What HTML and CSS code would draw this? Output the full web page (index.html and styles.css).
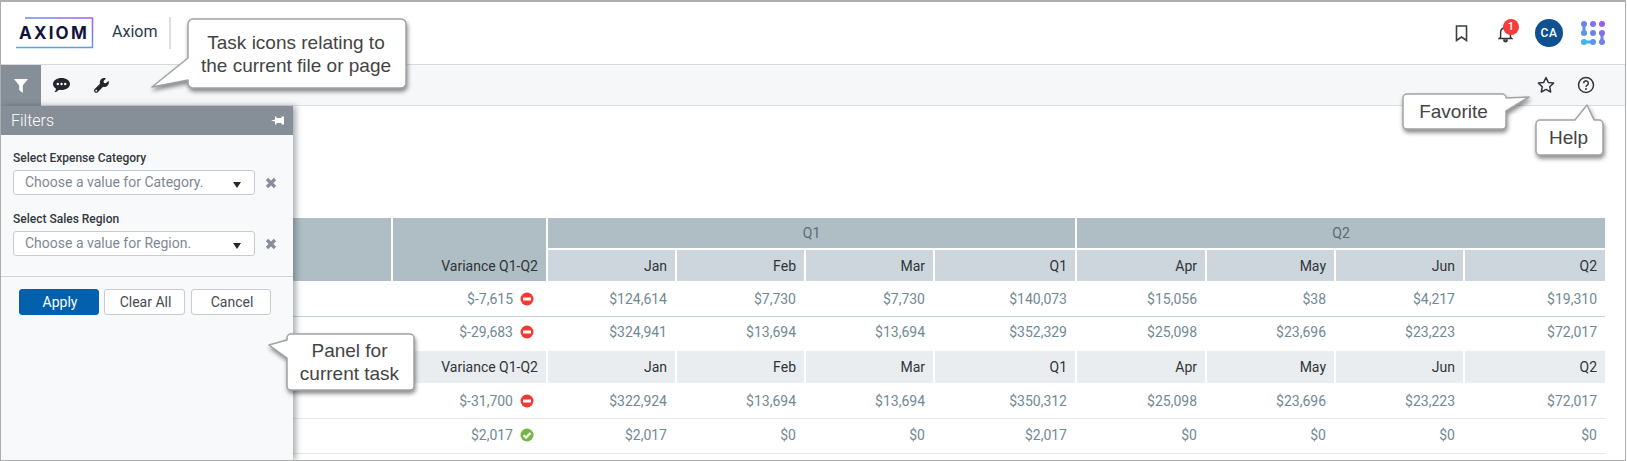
FILE: index.html
```html
<!DOCTYPE html>
<html lang="en">
<head>
    <meta charset="UTF-8">
    <title>Axiom</title>
    <link rel="stylesheet" href="styles.css">
</head>
<body>
    <div class="frame">
        <header class="topbar">
            <div class="logo">
                <svg class="logo-box" width="78" height="32" viewBox="0 0 78 32">
                    <defs>
                        <linearGradient id="logoGrad" x1="0" y1="1" x2="1" y2="0">
                            <stop offset="0" stop-color="#35b6f2"/>
                            <stop offset="0.5" stop-color="#5f97ee"/>
                            <stop offset="1" stop-color="#a85cf2"/>
                        </linearGradient>
                    </defs>
                    <path d="M9 1H76.500V30.500H0" fill="none" stroke="url(#logoGrad)" stroke-width="1.500"/>
                </svg>
                <span class="logo-text">AXIOM</span>
            </div>
            <div class="app-name">Axiom</div>
            <div class="top-icons">
                <div class="top-icon">
                    <svg width="13" height="17" viewBox="0 0 13 17"><path d="M1.500 1H11.500V15.500L6.500 12L1.500 15.500Z" fill="none" stroke="#3a3f46" stroke-width="1.600"/></svg>
                </div>
                <div class="top-icon">
                    <svg class="bell" width="15" height="18" viewBox="0 0 18 22"><path d="M3 15V9a6 6 0 0 1 12 0v6l1.500 1.500H1.500ZM7 18.500h4a2 2 0 0 1-4 0Z" fill="none" stroke="#2f343a" stroke-width="1.800"/></svg>
                    <span class="badge">1</span>
                </div>
                <div class="top-icon"><span class="avatar">CA</span></div>
                <div class="top-icon">
                    <svg width="26" height="28" viewBox="0 0 26 28">
                        <path d="M4 5V14" stroke="#5f8df0" stroke-width="3"/>
                        <path d="M4 23H13" stroke="#3fb0f0" stroke-width="3"/>
                        <path d="M22 14V23" stroke="#7d7cf0" stroke-width="3"/>
                        <circle cx="4" cy="5" r="3" fill="#6b82f0"/>
                        <circle cx="13" cy="5" r="3" fill="#8270f0"/>
                        <circle cx="22" cy="5" r="3" fill="#9b5cf0"/>
                        <circle cx="4" cy="14" r="3" fill="#5a94f0"/>
                        <circle cx="13" cy="14" r="3" fill="#6b82f0"/>
                        <circle cx="22" cy="14" r="3" fill="#8270f0"/>
                        <circle cx="4" cy="23" r="3" fill="#3fb4f0"/>
                        <circle cx="13" cy="23" r="3" fill="#5a94f0"/>
                        <circle cx="22" cy="23" r="3" fill="#6b82f0"/>
                    </svg>
                </div>
            </div>
        </header>

        <nav class="toolbar">
            <div class="tool active">
                <svg width="14" height="14" viewBox="0 0 14 14"><path d="M0 0H14L8.800 6.500V14L5.200 11V6.500Z" fill="#fff"/></svg>
            </div>
            <div class="tool">
                <svg width="17" height="15" viewBox="0 0 17 15">
                    <path d="M8.500 0C13.200 0 17 2.600 17 6S13.200 12 8.500 12C7.600 12 6.800 11.900 6 11.700C5 12.900 3.300 14 1.200 14.300C2.200 13.300 2.900 12 3 10.700C1.200 9.600 0 7.900 0 6C0 2.600 3.800 0 8.500 0Z" fill="#23262c"/>
                    <circle cx="4.800" cy="6" r="1.200" fill="#fff"/><circle cx="8.500" cy="6" r="1.200" fill="#fff"/><circle cx="12.200" cy="6" r="1.200" fill="#fff"/>
                </svg>
            </div>
            <div class="tool">
                <svg width="15" height="15" viewBox="0 0 16 16">
                    <path d="M15.700 3.600C15.600 3.200 15.200 3.200 15 3.400L12.700 5.700L10.600 5.300L10.200 3.200L12.500.900C12.700.700 12.700.300 12.300.200C10.600-.300 8.700.200 7.500 1.400C6.200 2.700 5.900 4.500 6.400 6.100L.700 11.800C-.200 12.700-.200 14.200.700 15.100C1.600 16 3.100 16 4 15.100L9.700 9.400C11.300 9.900 13.100 9.600 14.400 8.300C15.700 7.100 16.100 5.200 15.700 3.600Z" fill="#23262c"/>
                    <circle cx="2.400" cy="13.500" r="1" fill="#fff"/>
                </svg>
            </div>
            <div class="tool-spacer"></div>
            <div class="tool">
                <svg width="18" height="18" viewBox="0 0 18 18"><path d="M9 1.500L11.300 6.400L16.600 7.100L12.700 10.700L13.700 16L9 13.400L4.300 16L5.300 10.700L1.400 7.100L6.700 6.400Z" fill="none" stroke="#33373d" stroke-width="1.500" stroke-linejoin="round"/></svg>
            </div>
            <div class="tool">
                <svg width="18" height="18" viewBox="0 0 18 18">
                    <circle cx="9" cy="9" r="7.500" fill="none" stroke="#33373d" stroke-width="1.500"/>
                    <path d="M6.700 7.200A2.300 2.300 0 1 1 10.300 9.100C9.500 9.600 9 10 9 11" fill="none" stroke="#33373d" stroke-width="1.500"/>
                    <circle cx="9" cy="13" r="1" fill="#33373d"/>
                </svg>
            </div>
        </nav>

        <main class="content">
            <table class="grid">
                <colgroup>
                    <col class="col-label"><col class="col-var">
                    <col class="col-m"><col class="col-m"><col class="col-m"><col class="col-q">
                    <col class="col-apr"><col class="col-m"><col class="col-m"><col class="col-q">
                </colgroup>
                <thead>
                    <tr class="head-top">
                        <th rowspan="2"></th>
                        <th rowspan="2" class="var-head">Variance Q1-Q2</th>
                        <th colspan="4" class="quarter">Q1</th>
                        <th colspan="4" class="quarter">Q2</th>
                    </tr>
                    <tr class="head-sub">
                        <th>Jan</th><th>Feb</th><th>Mar</th><th>Q1</th>
                        <th>Apr</th><th>May</th><th>Jun</th><th>Q2</th>
                    </tr>
                </thead>
                <tbody>
                    <tr class="row-strong">
                        <td></td>
                        <td class="var">$-7,615<svg class="status"><use href="#stop"/></svg></td>
                        <td>$124,614</td><td>$7,730</td><td>$7,730</td><td>$140,073</td>
                        <td>$15,056</td><td>$38</td><td>$4,217</td><td>$19,310</td>
                    </tr>
                    <tr class="row-plain">
                        <td></td>
                        <td class="var">$-29,683<svg class="status"><use href="#stop"/></svg></td>
                        <td>$324,941</td><td>$13,694</td><td>$13,694</td><td>$352,329</td>
                        <td>$25,098</td><td>$23,696</td><td>$23,223</td><td>$72,017</td>
                    </tr>
                    <tr class="head-light">
                        <th></th>
                        <th class="var-head">Variance Q1-Q2</th>
                        <th>Jan</th><th>Feb</th><th>Mar</th><th>Q1</th>
                        <th>Apr</th><th>May</th><th>Jun</th><th>Q2</th>
                    </tr>
                    <tr class="row-light">
                        <td></td>
                        <td class="var">$-31,700<svg class="status"><use href="#stop"/></svg></td>
                        <td>$322,924</td><td>$13,694</td><td>$13,694</td><td>$350,312</td>
                        <td>$25,098</td><td>$23,696</td><td>$23,223</td><td>$72,017</td>
                    </tr>
                    <tr class="row-light row-last">
                        <td></td>
                        <td class="var">$2,017<svg class="status"><use href="#ok"/></svg></td>
                        <td>$2,017</td><td>$0</td><td>$0</td><td>$2,017</td>
                        <td>$0</td><td>$0</td><td>$0</td><td>$0</td>
                    </tr>
                </tbody>
            </table>
        </main>

        <aside class="panel">
            <div class="panel-head">
                <span>Filters</span>
                <svg width="13" height="9" viewBox="0 0 13 9"><path d="M0 4.500L4 3.500V.500H5.500V2H10.500V.500H13V8.500H10.500V7H5.500V8.500H4V5.500Z" fill="#fff"/></svg>
            </div>
            <div class="filters">
                <div class="field">
                    <label class="field-label">Select Expense Category</label>
                    <div class="field-row">
                        <div class="select">Choose a value for Category.<span class="caret"></span></div>
                        <svg class="clear" width="12" height="12" viewBox="0 0 12 12"><path d="M2 2L10 10M10 2L2 10" stroke="#878e98" stroke-width="3.200"/></svg>
                    </div>
                </div>
                <div class="field">
                    <label class="field-label">Select Sales Region</label>
                    <div class="field-row">
                        <div class="select">Choose a value for Region.<span class="caret"></span></div>
                        <svg class="clear" width="12" height="12" viewBox="0 0 12 12"><path d="M2 2L10 10M10 2L2 10" stroke="#878e98" stroke-width="3.200"/></svg>
                    </div>
                </div>
            </div>
            <div class="actions">
                <button class="btn primary">Apply</button>
                <button class="btn clear-all">Clear All</button>
                <button class="btn cancel">Cancel</button>
            </div>
        </aside>

        <div class="callout callout-task">
            <svg class="callout-shape" width="218" height="69"><path d="M5 0H213a5 5 0 0 1 5 5V64a5 5 0 0 1-5 5H5a5 5 0 0 1-5-5V61L-36 68L0 39V5a5 5 0 0 1 5-5Z"/></svg>
            <span>Task icons relating to<br>the current file or page</span>
        </div>
        <div class="callout callout-fav">
            <svg class="callout-shape" width="103" height="35"><path d="M4 0H99a4 4 0 0 1 4 4L126 3L103 17V31a4 4 0 0 1-4 4H4a4 4 0 0 1-4-4V4a4 4 0 0 1 4-4Z"/></svg>
            <span>Favorite</span>
        </div>
        <div class="callout callout-help">
            <svg class="callout-shape" width="67" height="35"><path d="M4 0H39L51-15L58 0H63a4 4 0 0 1 4 4V31a4 4 0 0 1-4 4H4a4 4 0 0 1-4-4V4a4 4 0 0 1 4-4Z"/></svg>
            <span>Help</span>
        </div>
        <div class="callout callout-panel">
            <svg class="callout-shape" width="127" height="56"><path d="M4 0H123a4 4 0 0 1 4 4V52a4 4 0 0 1-4 4H4a4 4 0 0 1-4-4V24L-18 11L0 6V4a4 4 0 0 1 4-4Z"/></svg>
            <span>Panel for<br>current task</span>
        </div>
    </div>

    <svg class="defs" width="0" height="0">
        <symbol id="stop" viewBox="0 0 14 14">
            <circle cx="7" cy="7" r="6.500" fill="#f03a32"/>
            <rect x="3" y="5.500" width="8" height="3" fill="#fff"/>
        </symbol>
        <symbol id="ok" viewBox="0 0 14 14">
            <circle cx="7" cy="7" r="6.500" fill="#72b843"/>
            <path d="M3.600 7.200L6 9.600L10.500 5" fill="none" stroke="#fff" stroke-width="2.200"/>
        </symbol>
    </svg>
</body>
</html>
```

FILE: styles.css
```css
* {
    box-sizing: border-box;
}

body {
    margin: 0;
    font-family: Roboto, "Liberation Sans", sans-serif;
    background: #fff;
}

.frame {
    position: relative;
    width: 1626px;
    height: 461px;
    border: 1px solid #adadad;
    border-top-width: 2px;
    overflow: hidden;
}

.defs {
    position: absolute;
}

/* top bar */
.topbar {
    display: flex;
    align-items: center;
    height: 63px;
    border-bottom: 1px solid #d6d9dd;
    padding-left: 15px;
}

.logo {
    position: relative;
    width: 78px;
    height: 32px;
    display: flex;
    align-items: center;
    padding-left: 3px;
}

.logo-box {
    position: absolute;
    left: 0;
    top: 0;
}

.logo-text {
    position: relative;
    font-family: Inter, "Liberation Sans", sans-serif;
    font-size: 17px;
    font-weight: 700;
    letter-spacing: 2.2px;
    color: #14133c;
}

.app-name {
    width: 77px;
    height: 32px;
    line-height: 30px;
    padding-left: 18px;
    font-size: 16px;
    color: #2e3a4c;
    border-right: 2px solid #dcdfe4;
}

.top-icons {
    display: flex;
    margin-left: auto;
    padding-right: 10px;
}

.top-icon {
    position: relative;
    width: 44px;
    height: 40px;
    display: flex;
    align-items: center;
    justify-content: center;
}

.bell {
    margin-bottom: -1px;
}

.badge {
    position: absolute;
    left: 20px;
    top: 6px;
    width: 16px;
    height: 16px;
    border-radius: 50%;
    background: #f53c3c;
    color: #fff;
    font-size: 11px;
    font-weight: 500;
    line-height: 16px;
    text-align: center;
}

.avatar {
    width: 28px;
    height: 28px;
    border-radius: 50%;
    background: #0f5190;
    color: #fff;
    font-size: 12px;
    font-weight: 500;
    line-height: 28px;
    text-align: center;
    letter-spacing: .5px;
}

/* task toolbar */
.toolbar {
    display: flex;
    height: 41px;
    background: #f6f7f9;
    border-bottom: 1px solid #dcdfe3;
    padding-right: 19px;
}

.tool {
    width: 40px;
    height: 40px;
    display: flex;
    align-items: center;
    justify-content: center;
}

.tool.active {
    height: 41px;
    background: #868e98;
}

.tool-spacer {
    flex: 1;
}

/* table */
.content {
    padding-top: 112px;
}

.grid {
    width: 1604px;
    table-layout: fixed;
    border-collapse: separate;
    border-spacing: 0;
    font-size: 14px;
}

.col-label { width: 390px; }
.col-var { width: 155px; }
.col-m { width: 129px; }
.col-q { width: 142px; }
.col-apr { width: 130px; }

.grid th,
.grid td {
    text-align: right;
    padding: 0 8px 0 0;
    font-weight: 400;
    border-left: 2px solid #fff;
}

.grid th {
    color: #2f3439;
}

.head-top th {
    height: 32px;
    background: #afbdc4;
    border-bottom: 2px solid #fff;
}

.head-top th[rowspan] {
    height: 63px;
    border-bottom: 0;
    vertical-align: bottom;
    padding-bottom: 7px;
}

.head-top .quarter {
    text-align: center;
    color: #5c6b74;
    padding: 0;
}

.head-sub th {
    height: 31px;
    background: #cdd6dc;
}

.head-light th {
    height: 32px;
    background: #eaedf0;
}

.grid td {
    color: #708a94;
    border-left: 0;
}

.row-strong td {
    height: 36px;
    border-bottom: 1px solid #c3cfd6;
}

.row-plain td {
    height: 34px;
    padding-bottom: 4px;
}

.row-light td {
    height: 36px;
    border-bottom: 1px solid #e3e7ea;
}

.row-last td {
    height: 35px;
    padding-bottom: 3px;
}

.grid td.var {
    padding-right: 12px;
}

.status {
    width: 14px;
    height: 14px;
    margin-left: 7px;
    vertical-align: -2px;
}

/* filter panel */
.panel {
    position: absolute;
    left: 0;
    top: 104px;
    bottom: 0;
    width: 292px;
    background: #f8f9fb;
    box-shadow: 3px 0 6px rgba(60, 70, 80, .45);
}

.panel-head {
    display: flex;
    align-items: center;
    justify-content: space-between;
    height: 29px;
    padding: 0 9px 1px 10px;
    background: #868e98;
    color: #fff;
    font-size: 16px;
    font-weight: 300;
}

.filters {
    padding: 16px 0 20px 12px;
    border-bottom: 1px solid #cfd3da;
}

.field {
    margin-bottom: 17px;
}

.field:last-child {
    margin-bottom: 0;
}

.field-label {
    display: block;
    font-size: 12px;
    font-weight: 500;
    line-height: 14px;
    color: #33383e;
    margin-bottom: 5px;
}

.field-row {
    display: flex;
    align-items: center;
}

.select {
    position: relative;
    width: 242px;
    height: 25px;
    line-height: 22px;
    padding-left: 11px;
    background: #fff;
    border: 1px solid #c8ccd2;
    border-radius: 3px;
    font-size: 14px;
    color: #7f8892;
}

.caret {
    position: absolute;
    right: 13px;
    top: 11px;
    border-left: 4px solid transparent;
    border-right: 4px solid transparent;
    border-top: 6px solid #25282d;
}

.clear {
    margin-left: 10px;
}

.actions {
    display: flex;
    padding: 12px 0 0 18px;
}

.btn {
    height: 26px;
    padding: 0 0 0 2px;
    background: #fff;
    border: 1px solid #c8ccd2;
    border-radius: 3px;
    font-family: inherit;
    font-size: 14px;
    color: #444b52;
}

.btn.primary {
    width: 80px;
    background: #0260ad;
    border-color: #0260ad;
    color: #fff;
}

.clear-all {
    width: 81px;
    margin-left: 5px;
}

.cancel {
    width: 80px;
    margin-left: 6px;
}

/* annotation callouts */
.callout {
    position: absolute;
    display: flex;
    align-items: center;
    justify-content: center;
    padding-right: 2px;
    text-align: center;
    font-family: "Liberation Sans", Arial, sans-serif;
    font-size: 19px;
    line-height: 23px;
    color: #444;
}

.callout span {
    position: relative;
}

.callout-shape {
    position: absolute;
    left: 0;
    top: 0;
    overflow: visible;
    filter: drop-shadow(1px 3px 2px rgba(0, 0, 0, .45));
}

.callout-shape path {
    fill: #fff;
    stroke: #a3a3a3;
    stroke-width: 1.500;
    stroke-linejoin: round;
}

.callout-task {
    left: 187px;
    top: 17px;
    width: 218px;
    height: 69px;
}

.callout-fav {
    left: 1402px;
    top: 92px;
    width: 103px;
    height: 35px;
}

.callout-help {
    left: 1535px;
    top: 118px;
    width: 67px;
    height: 35px;
}

.callout-panel {
    left: 286px;
    top: 332px;
    width: 127px;
    height: 56px;
}
```
